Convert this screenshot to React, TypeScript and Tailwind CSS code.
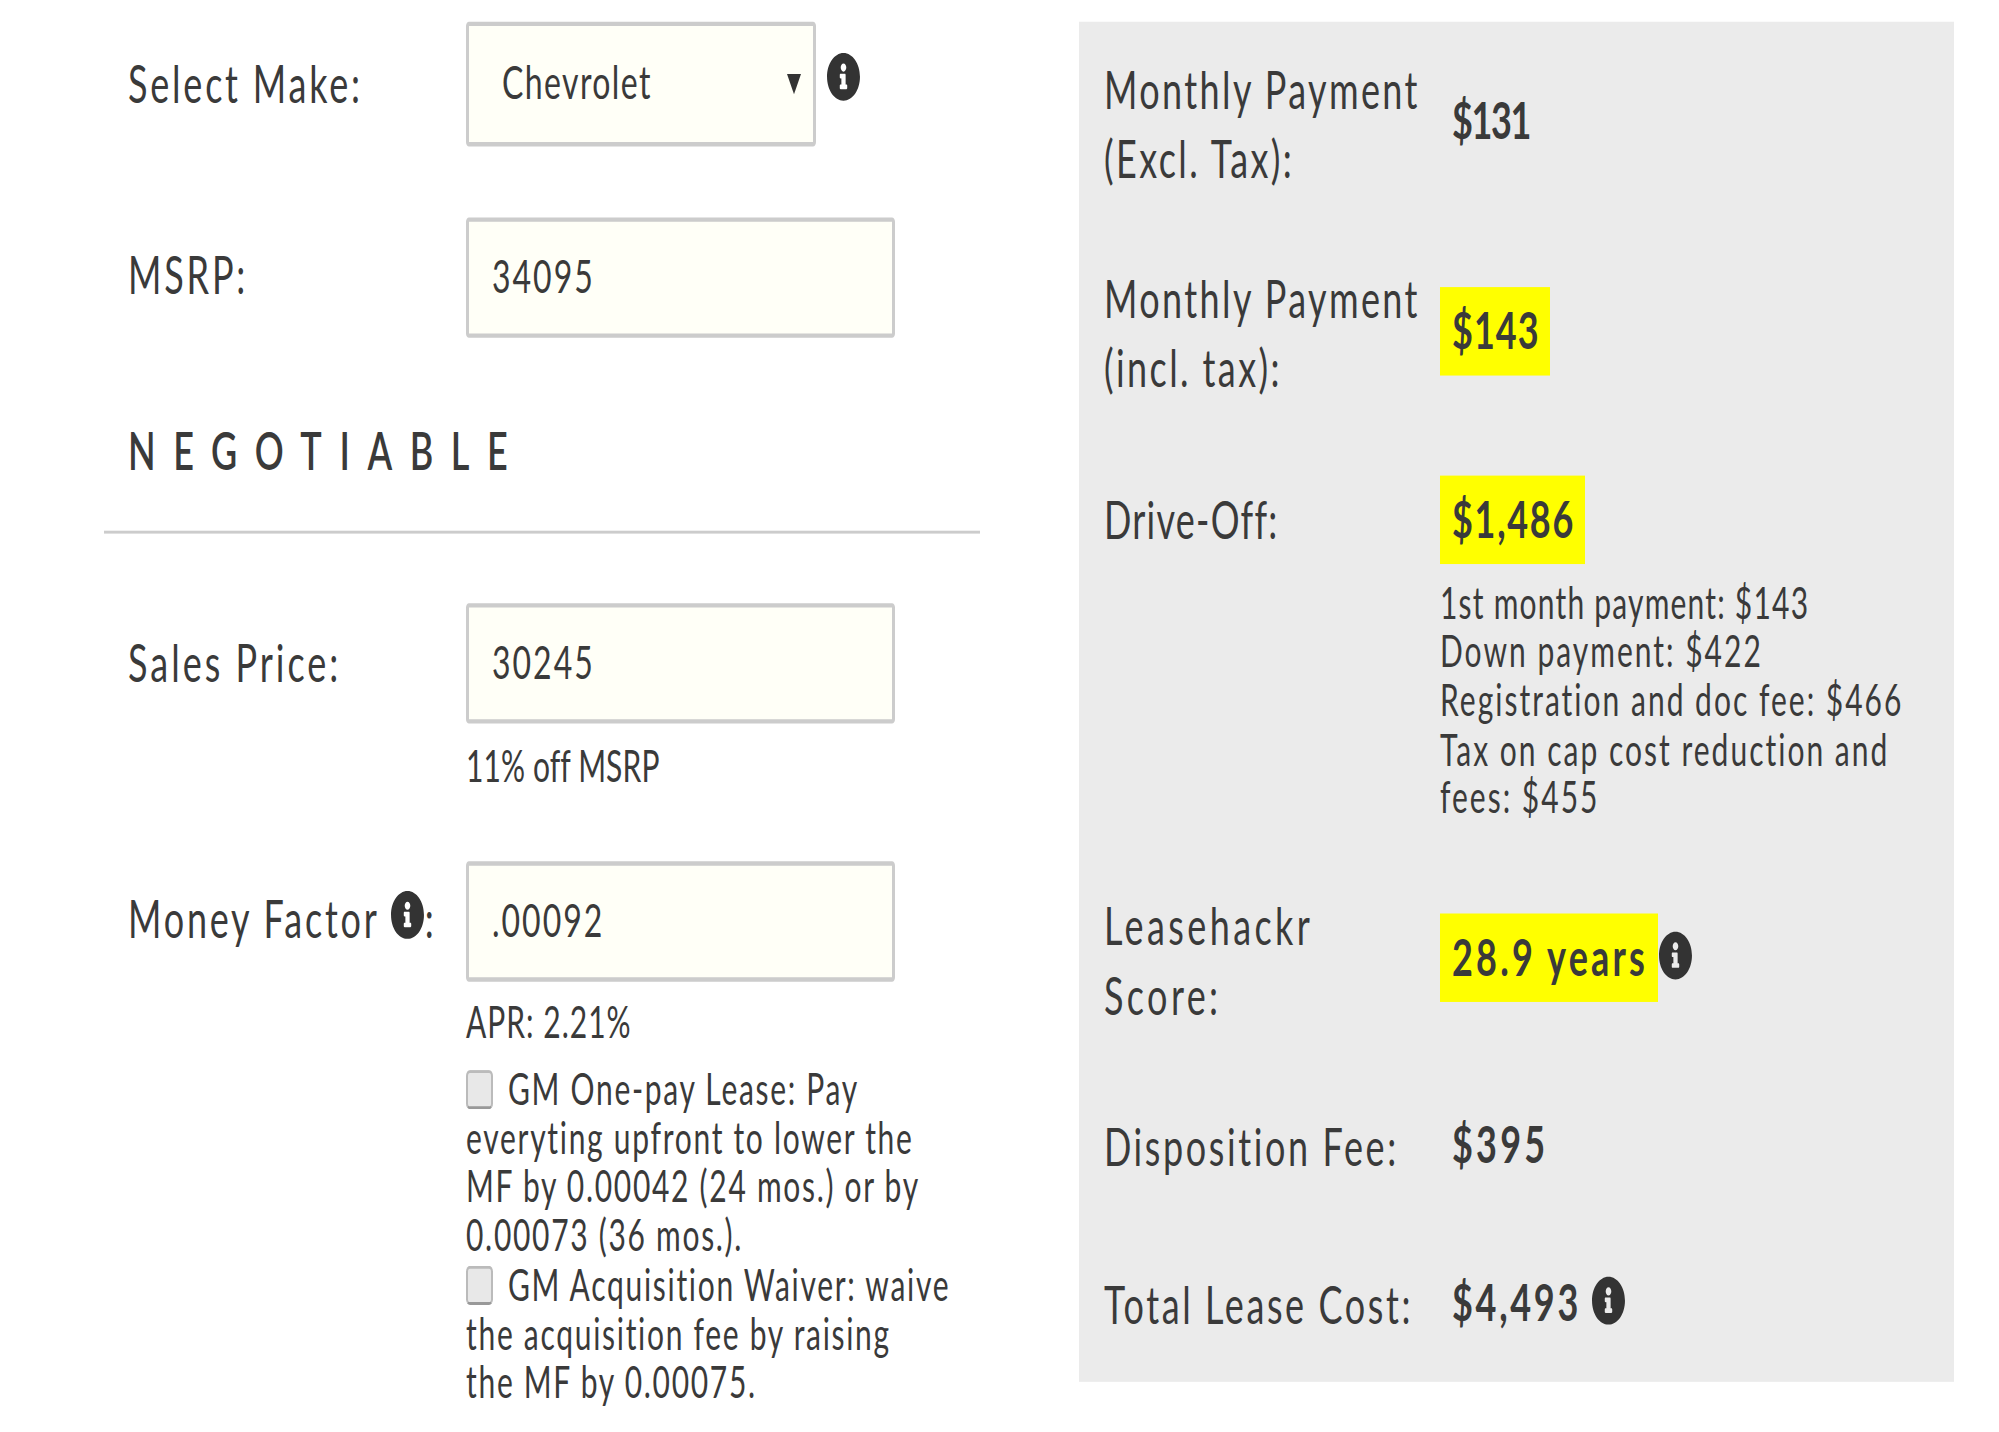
import { FaInfoCircle } from "react-icons/fa";

function Info({ className = "" }: { className?: string }) {
  return <FaInfoCircle className={`inline-block w-[35px] h-[34px] text-[#333] shrink-0 ${className}`} />;
}

function TextInput({ value }: { value: string }) {
  return (
    <input
      readOnly
      value={value}
      className="block w-[429px] h-[83px] border-[3px] border-[#ccc] rounded-[3px] bg-[#fffff7] pl-[23px] pb-[5px] text-[32px] tracking-[2px] text-[#3a3a3a] outline-none"
    />
  );
}

function Check() {
  return (
    <input
      type="checkbox"
      readOnly
      className="appearance-none inline-block align-[-3px] w-[27px] h-[27px] mr-[15px] rounded-[4px] bg-[#e8e8e8] border-[2px] border-[#bbb] border-b-[#999]"
    />
  );
}

function Row({ label, className = "", children }: { label: React.ReactNode; className?: string; children: React.ReactNode }) {
  return (
    <div className={`flex ${className}`}>
      <div className="w-[336px] shrink-0 text-[36px] leading-[48px] tracking-[2.6px]">{label}</div>
      <div className="flex-1">{children}</div>
    </div>
  );
}

function Highlight({ className = "", children }: { className?: string; children: React.ReactNode }) {
  return (
    <span className={`inline-flex items-center h-[61px] pl-[12px] pr-[10px] pb-[3px] bg-[#ffff00] text-[36px] font-bold ${className}`}>
      {children}
    </span>
  );
}

export default function App() {
  return (
    <div className="h-[1432px] overflow-hidden bg-white">
      <div className="w-[1999px] h-[988px] origin-top scale-y-[1.45] flex items-start font-['Lato',sans-serif] text-[#3a3a3a]">
        {/* Inputs */}
        <div className="ml-[104px] w-[876px] pt-[15px] shrink-0">
          <div className="flex items-center pl-[24px]">
            <div className="w-[338px] mb-[2px] text-[36px] tracking-[2.8px]">Select Make:</div>
            <div className="relative w-[350px]">
              <select className="appearance-none block w-full h-[86px] border-[3px] border-[#ccc] rounded-[3px] bg-[#fffff7] pl-[33px] pb-[5px] text-[32px] tracking-[1.4px] text-[#3a3a3a] outline-none">
                <option>Chevrolet</option>
              </select>
              <span className="absolute right-[15px] top-[36px] w-0 h-0 border-x-[7px] border-x-transparent border-t-[14px] border-t-[#333]" />
            </div>
            <Info className="ml-[10px] -mt-[10px]" />
          </div>

          <div className="flex items-center pl-[24px] mt-[49px]">
            <div className="w-[338px] mb-[5px] text-[36px] tracking-[2.8px]">MSRP:</div>
            <TextInput value="34095" />
          </div>

          <div className="pl-[24px] mt-[53px] text-[36px] leading-[48px] font-semibold tracking-[17.6px]">NEGOTIABLE</div>
          <div className="mt-[32px] h-[2px] bg-[#ccc]" />

          <div className="flex items-center pl-[24px] mt-[48px]">
            <div className="w-[338px] mb-[4px] text-[36px] tracking-[3px]">Sales Price:</div>
            <TextInput value="30245" />
          </div>
          <div className="pl-[362px] mt-[11px] text-[30px] leading-[34px] tracking-[0.1px]">11% off MSRP</div>

          <div className="flex items-center pl-[24px] mt-[50px]">
            <div className="w-[338px] mb-[6px] text-[36px] tracking-[2.8px] flex items-center">
              Money Factor <Info className="ml-[10px] -mt-[3px]" />:
            </div>
            <TextInput value=".00092" />
          </div>
          <div className="pl-[362px] mt-[10px] text-[30px] leading-[34px] tracking-[1px]">APR: 2.21%</div>
          <div className="pl-[362px] mt-[13px] text-[30px] leading-[33.7px] tracking-[1.7px] whitespace-nowrap">
            <Check />GM One-pay Lease: Pay
            <br />
            everyting upfront to lower the
            <br />
            MF by 0.00042 (24 mos.) or by
            <br />
            0.00073 (36 mos.).
            <br />
            <Check />GM Acquisition Waiver: waive
            <br />
            the acquisition fee by raising
            <br />
            the MF by 0.00075.
          </div>
        </div>

        {/* Results */}
        <div className="ml-[99px] mt-[14.5px] w-[875px] h-[938.5px] bg-[#ebebeb] pl-[25px] pt-[22.5px] shrink-0">
          <Row label={<span className="tracking-[2.4px]">Monthly Payment<br />(Excl. Tax):</span>}>
            <div className="pl-[12px] pt-[21px] text-[36px] leading-[48px] font-bold tracking-[-1.4px]">$131</div>
          </Row>
          <Row label={<span className="tracking-[2.4px]">Monthly Payment<br />(incl. tax):</span>} className="mt-[47.5px]">
            <div className="pt-[17px]"><Highlight className="tracking-[1px]">$143</Highlight></div>
          </Row>
          <Row label={<span className="tracking-[1.25px]">Drive-Off:</span>} className="mt-[57px]">
            <div className="-mt-[6px]"><Highlight className="tracking-[1.7px]">$1,486</Highlight></div>
            <div className="mt-[10px] text-[30px] leading-[33.7px] tracking-[2px] whitespace-nowrap">
              <span className="tracking-[1.2px]">1st month payment: $143</span>
              <br />
              Down payment: $422
              <br />
              Registration and doc fee: $466
              <br />
              Tax on cap cost reduction and
              <br />
              fees: $455
            </div>
          </Row>
          <Row label={<span className="tracking-[3.4px]">Leasehackr<br />Score:</span>} className="mt-[47px]">
            <div className="flex items-center pt-[16px]">
              <Highlight className="tracking-[3.2px]">28.9 years</Highlight>
              <Info className="-mt-[4px]" />
            </div>
          </Row>
          <Row label="Disposition Fee:" className="mt-[56px]">
            <div className="pl-[12px] -mt-[2px] text-[36px] leading-[48px] font-bold tracking-[3.2px]">$395</div>
          </Row>
          <Row label="Total Lease Cost:" className="mt-[61px]">
            <div className="pl-[12px] -mt-[2px] flex items-center gap-[10px] text-[36px] leading-[48px] font-bold tracking-[2.7px]">
              $4,493 <Info />
            </div>
          </Row>
        </div>
      </div>
    </div>
  );
}
